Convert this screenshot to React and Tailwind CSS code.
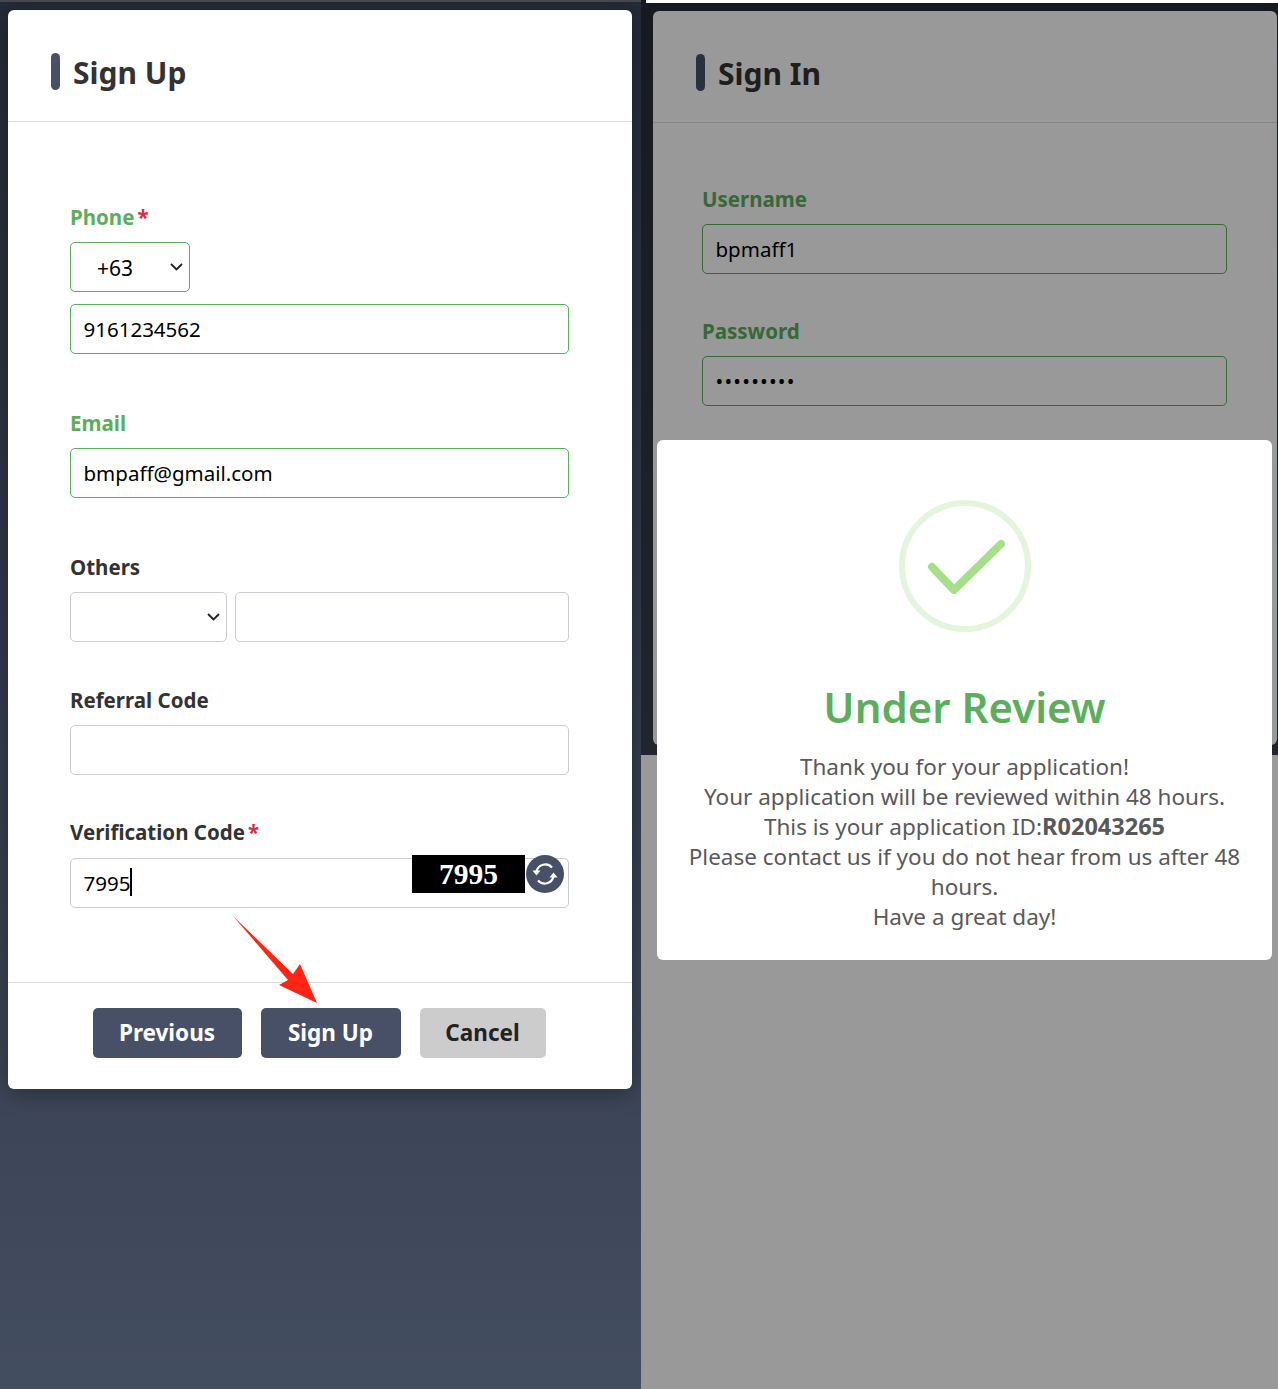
import React from 'react';

const FONT = "font-['Noto_Sans',sans-serif]";

function PanelHeader({ title }) {
  return (
    <div className="flex h-[112px] items-center border-b border-[#dedede] pl-[43px] pt-3">
      <span className="mr-[13px] h-[37px] w-[9px] rounded-full bg-[#475067]" />
      <h2 className="pt-[1px] text-[30px] font-bold text-[#333333]">{title}</h2>
    </div>
  );
}

function Label({ text, required, color = 'text-[#333333]', className = '' }) {
  return (
    <div className={`flex h-6 items-center text-[20.5px] font-bold ${color} ${className}`}>
      {text}
      {required && <span className="ml-[3px] text-[#dc2a44]">*</span>}
    </div>
  );
}

function Input({ value = '', green, type = 'text', className = 'w-full' }) {
  return (
    <input
      type={type}
      defaultValue={value}
      className={`h-[50px] min-w-0 rounded-[5px] border bg-white px-[12.5px] text-[20.5px] text-black outline-none ${green ? 'border-[#5cae5c]' : 'border-[#c9ccd1]'} ${className}`}
    />
  );
}

function Select({ value, green, className }) {
  return (
    <div className={`relative shrink-0 ${className}`}>
      <select
        defaultValue={value}
        className={`h-[50px] w-full appearance-none rounded-[5px] border bg-white pl-[26px] pt-[3px] text-[21px] text-black outline-none ${green ? 'border-[#5cae5c]' : 'border-[#c9ccd1]'}`}
      >
        <option value={value}>{value}</option>
      </select>
      <svg className="pointer-events-none absolute right-[7px] top-[21px]" width="13" height="8" viewBox="0 0 13 8" fill="none">
        <path d="M1 1 L6.5 6.5 L12 1" stroke="#222222" strokeWidth="1.8" />
      </svg>
    </div>
  );
}

function Button({ children, className }) {
  return (
    <button className={`flex h-[50px] items-center justify-center rounded-[5px] text-[22.5px] font-bold ${className}`}>
      {children}
    </button>
  );
}

function RefreshIcon() {
  return (
    <svg width="38" height="38" viewBox="0 0 38 38" fill="none">
      <circle cx="19" cy="19" r="19" fill="#475067" />
      <path d="M10.5 16.5 A9 9 0 0 1 26 12.5" stroke="white" strokeWidth="2.2" />
      <path d="M27.5 21.5 A9 9 0 0 1 12 25.5" stroke="white" strokeWidth="2.2" />
      <path d="M6.5 15.5 L14.5 15.5 L10.5 20.5 Z" fill="white" />
      <path d="M23.5 22.5 L31.5 22.5 L27.5 17.5 Z" fill="white" />
    </svg>
  );
}

function SignUpCard() {
  return (
    <div className="w-[624px] rounded-[6px] bg-white shadow-[0_4px_24px_rgba(0,0,0,0.35)]">
      <PanelHeader title="Sign Up" />
      <div className="pl-[62px] pr-[63px] pt-[83px] pb-[74px]">
        <Label text="Phone" required color="text-[#5cae5c]" className="mb-[13px]" />
        <Select value="+63" green className="w-[120px]" />
        <Input value="9161234562" green className="mt-3 w-full" />

        <Label text="Email" color="text-[#5cae5c]" className="mt-[57px] mb-[13px]" />
        <Input value="bmpaff@gmail.com" green />

        <Label text="Others" className="mt-[57px] mb-[13px]" />
        <div className="flex gap-2">
          <Select value="" className="w-[157px]" />
          <Input className="flex-1" />
        </div>

        <Label text="Referral Code" className="mt-[46px] mb-[13px]" />
        <Input />

        <Label text="Verification Code" required className="mt-[45px] mb-[14px]" />
        <div className="relative">
          <Input value="7995" />
          <span className="absolute left-[60px] top-[10px] h-[28px] w-[2px] bg-black" />
          <div className="absolute left-[342px] top-[-3px] flex h-[38px] w-[113px] items-center justify-center bg-black pt-[1px] font-['Liberation_Serif',serif] text-[29.5px] font-bold text-white">
            7995
          </div>
          <div className="absolute left-[456px] top-[-3px]">
            <RefreshIcon />
          </div>
        </div>
      </div>

      <div className="flex justify-center gap-[19px] border-t border-[#dedede] pt-[25px] pb-[31px] pr-[2px]">
        <Button className="w-[149px] bg-[#475067] text-white">Previous</Button>
        <Button className="w-[140px] bg-[#475067] text-white">Sign Up</Button>
        <Button className="w-[126px] bg-[#cccccc] text-[#222222]">Cancel</Button>
      </div>
    </div>
  );
}

function SignInCard() {
  return (
    <div className="h-[734px] w-[624px] rounded-[6px] bg-white">
      <PanelHeader title="Sign In" />
      <div className="pl-[49px] pr-[50px] pt-[64px]">
        <Label text="Username" color="text-[#5cae5c]" className="mb-[13px]" />
        <Input value="bpmaff1" green />
        <Label text="Password" color="text-[#5cae5c]" className="mt-[45px] mb-[13px]" />
        <Input value="bpmaff123" type="password" green className="w-full tracking-[1.2px]" />
      </div>
    </div>
  );
}

function ReviewModal() {
  return (
    <div className="absolute left-[16px] top-[440px] flex h-[520px] w-[615px] flex-col items-center rounded-[6px] bg-white px-[30px] pt-[60px] text-center">
      <svg className="shrink-0" width="132" height="132" viewBox="0 0 132 132" fill="none">
        <circle cx="66" cy="66" r="63" stroke="#e5f4dc" strokeWidth="6" />
        <path d="M33 67 L55 90 L102 44" stroke="#a5df88" strokeWidth="8" strokeLinecap="round" strokeLinejoin="round" />
      </svg>
      <h2 className="mt-[45px] text-[42px] font-semibold leading-[60px] text-[#5cae5c]">Under Review</h2>
      <div className="mt-[15px] text-[22.5px] leading-[30px] text-[#595959]">
        Thank you for your application!
        <br />
        Your application will be reviewed within 48 hours.
        <br />
        This is your application ID:<b className="text-[23.5px] leading-none">R02043265</b>
        <br />
        Please contact us if you do not hear from us after 48 hours.
        <br />
        Have a great day!
      </div>
    </div>
  );
}

export default function App() {
  return (
    <div className={`flex h-[1389px] w-[1278px] overflow-hidden ${FONT}`}>
      <div className="relative h-full w-[641px] bg-gradient-to-b from-[#262b38] to-[#434d60] pl-2 pt-[10px]">
        <div className="absolute inset-x-0 top-0 h-[2px] bg-[#4a4650]" />
        <SignUpCard />
        <svg className="absolute left-[230px] top-[915px]" width="92" height="92" viewBox="230 915 92 92">
          <path d="M233 916 L293 974 L300 964 L317 1003 L279 985 L288 980 Z" fill="#ff2413" />
        </svg>
      </div>

      <div className="relative h-full flex-1 bg-white">
        <div className="h-[755px] bg-gradient-to-b from-[#262b38] to-[#363e50] pl-3 pt-[11px]">
          <SignInCard />
        </div>
        <div className="absolute inset-0 bg-black/40" />
        <div className="absolute left-[5px] right-0 top-0 h-[3px] bg-white" />
        <ReviewModal />
      </div>
    </div>
  );
}
